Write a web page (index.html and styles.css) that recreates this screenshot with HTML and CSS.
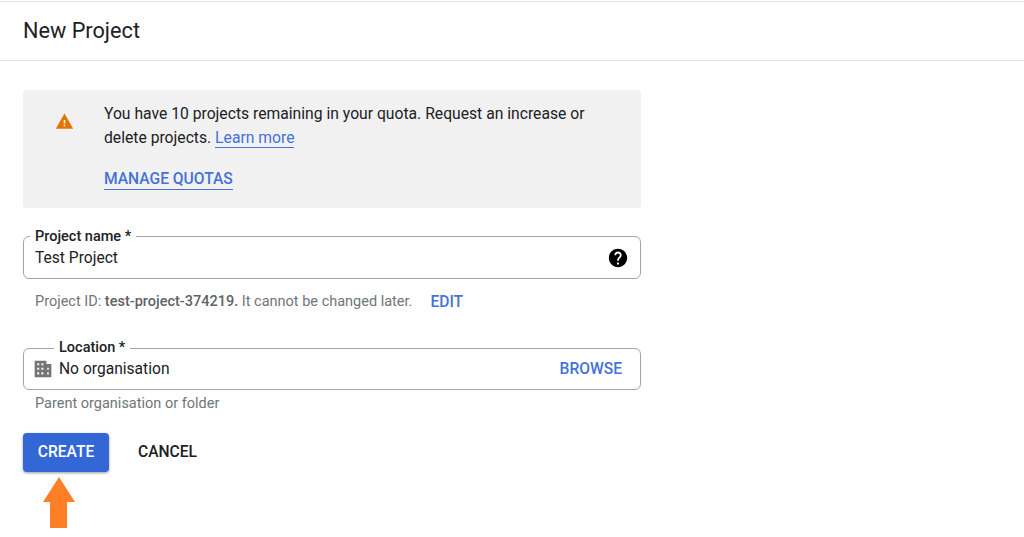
FILE: index.html
```html
<!DOCTYPE html>
<html lang="en">
<head>
<meta charset="utf-8">
<title>New Project</title>
<link rel="stylesheet" href="styles.css">
</head>
<body>
<header class="header"><h1 class="title">New Project</h1></header>
<main class="form">
  <section class="notice">
    <svg class="warn" viewBox="0 0 24 24" width="19" height="19"><path fill="#e37400" d="M1 21h22L12 2 1 21z"/><path fill="#fff" d="M11 10h2v4.500h-2zM11 16h2v2h-2z"/></svg>
    <div class="notice-body">
      <p class="notice-text">You have 10 projects remaining in your quota. Request an increase or delete projects. <a class="link" href="#">Learn more</a></p>
      <a class="link link-strong" href="#">MANAGE QUOTAS</a>
    </div>
  </section>
  <fieldset class="field field-name">
    <legend class="legend">Project name *</legend>
    <span class="value grow">Test Project</span>
    <svg class="help" viewBox="0 0 24 24" width="22" height="22"><path fill="#000" d="M12 2C6.480 2 2 6.480 2 12s4.480 10 10 10 10-4.480 10-10S17.520 2 12 2zm1 17h-2v-2h2v2zm2.070-7.750-.9.920C13.450 12.900 13 13.500 13 15h-2v-.5c0-1.100.45-2.100 1.170-2.830l1.240-1.260c.37-.36.590-.86.590-1.410 0-1.100-.9-2-2-2s-2 .9-2 2H8c0-2.210 1.790-4 4-4s4 1.790 4 4c0 .88-.36 1.680-.93 2.250z"/></svg>
  </fieldset>
  <p class="hint hint-id">Project ID: <b class="id">test-project-374219.</b> It cannot be changed later.<a class="edit" href="#">EDIT</a></p>
  <fieldset class="field field-location">
    <legend class="legend legend-loc">Location *</legend>
    <svg class="org" viewBox="0 0 24 24" width="20" height="20"><path fill="#757575" d="M2 2h14v4h6v16H2z"/><path fill="#f4f4f4" d="M5 5h2.500v2.500H5zM10 5h2.500v2.500H10zM5 10.500h2.500V13H5zM10 10.500h2.500V13H10zM5 16h2.500v2.500H5zM10 16h2.500v2.500H10zM17 10.500h2V13h-2zM17 16h2v2.500h-2z"/></svg>
    <span class="value grow">No organisation</span>
    <a class="browse" href="#">BROWSE</a>
  </fieldset>
  <p class="hint hint-parent">Parent organisation or folder</p>
  <div class="actions">
    <button class="btn btn-primary" type="button">CREATE</button>
    <button class="btn btn-plain" type="button">CANCEL</button>
  </div>
  <svg class="arrow" viewBox="0 0 32 51" width="32" height="51"><path fill="#ff7f27" d="M16 0 32 25H24V51H7V25H0z"/></svg>
</main>
</body>
</html>
```
FILE: styles.css
```css
* { box-sizing: border-box; }
html, body { margin: 0; height: 537px; overflow: hidden; background: #fff; }
body { font-family: Roboto, "Liberation Sans", sans-serif; color: #202124; padding-top: 1px; }
a { text-decoration: none; }
.header { height: 60px; border-top: 1px solid #e0e0e0; border-bottom: 1px solid #dfe0e1; padding-left: 23px; display: flex; align-items: center; }
.title { margin: 0; font-size: 21.7px; font-weight: 400; line-height: 28px; color: #202124; }
.form { width: 641px; padding: 29px 0 0 23px; display: flex; flex-direction: column; }
.notice { height: 118px; background: #f1f1f1; border-radius: 4px; display: flex; padding: 12px 0 0 32px; }
.warn { flex: none; margin: 10px 0 0 0; }
.notice-body { margin-left: 30px; width: 490px; }
.notice-text { margin: 0; font-size: 15.7px; line-height: 24px; color: #202124; }
.link { color: #4472d9; border-bottom: 1px solid #4472d9; }
.link-strong { display: inline-block; margin-top: 19px; font-size: 15.6px; font-weight: 500; line-height: 20px; }
.field { margin: 0; min-width: 0; padding: 0 11px; border: 1px solid #a4a4a4; border-radius: 6px; display: flex; align-items: center; }
.field-name { margin-top: 20px; height: 51px; padding-top: 3px; }
.field-location { margin-top: 28px; height: 50px; padding-top: 3px; }
.legend { padding: 0 5px; margin-left: -5px; font-size: 14.5px; font-weight: 500; line-height: 18px; height: 16px; color: #202124; }
.legend-loc { margin-left: 19px; line-height: 16px; }
.value { font-size: 15.6px; line-height: 20px; color: #202124; }
.grow { flex: 1; }
.help { flex: none; margin-right: 0; }
.org { flex: none; margin: 0 6px 0 -2px; }
.browse { color: #4472d9; font-size: 15.6px; font-weight: 500; margin-right: 7px; line-height: 20px; }
.hint { margin: 0; padding-left: 12px; font-size: 14.5px; line-height: 20px; color: #70757a; }
.hint-id { margin-top: 13px; display: flex; white-space: pre-wrap; }
.id { font-weight: 500; color: #5f6368; }
.edit { margin-left: 18px; font-weight: 500; font-size: 15.6px; color: #4472d9; }
.hint-parent { margin-top: 4px; }
.actions { margin-top: 19px; display: flex; gap: 16px; }
.btn { font-family: inherit; font-size: 15.6px; font-weight: 500; border: 0; border-radius: 4px; height: 39px; padding: 0 0 2px; }
.btn-primary { width: 86px; background: #3367d6; color: #fff; box-shadow: 0 1px 3px rgba(0,0,0,.4); }
.btn-plain { width: 85px; background: none; color: #202124; }
.arrow { margin: 5px 0 0 20px; }
```
